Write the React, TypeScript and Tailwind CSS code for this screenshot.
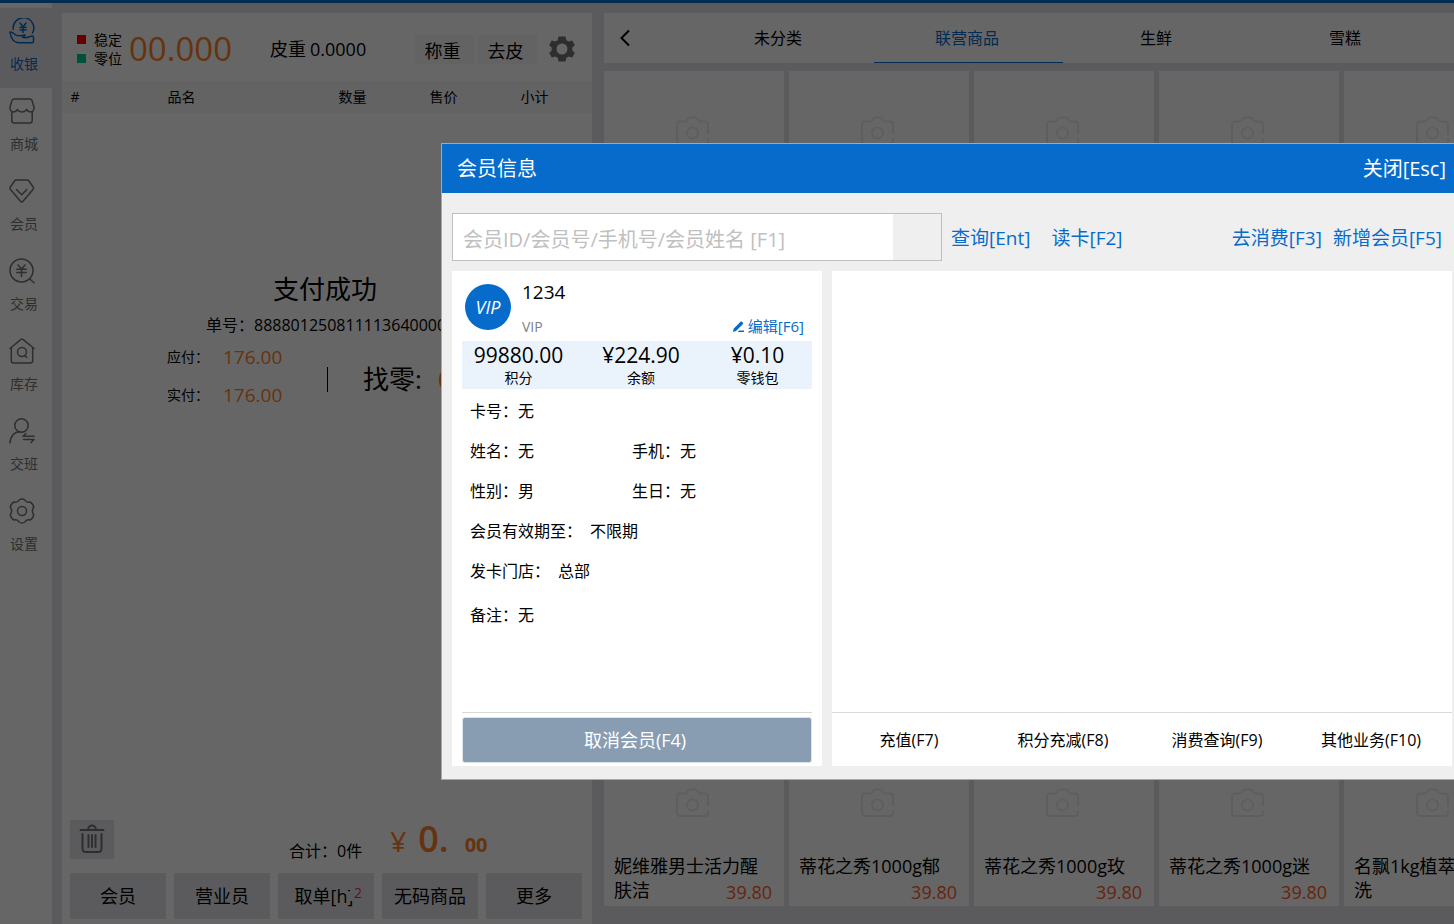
import React from 'react'

const iconProps = {
  width: 26,
  height: 26,
  viewBox: '0 0 26 26',
  fill: 'none',
  stroke: 'currentColor',
  strokeWidth: 1.5,
  strokeLinecap: 'round' as const,
  strokeLinejoin: 'round' as const,
  'aria-hidden': true,
}

const navItems = [
  {
    label: '收银',
    icon: (
      <svg {...iconProps}>
        <path d="M4.3 11.5A10.300 10.300 0 1 1 23.500 15" />
        <path d="M11 5l3 4 3-4M14 9v5.500M11 9.500h6M11 12h6" />
        <path d="M1 14c.8 6.500 4 10.700 9.500 10.700h12.500c1 0 1.500-.5 1.500-1.500v-4c0-.8-.4-1.200-1.300-1.200-2.200.1-3.700 1.700-6.200 1.700l-3.500-.4c2-.5 2.700-1.300 2.500-2.300-3.500.9-6.800 1.300-9.500-.2C4.800 15.600 3 13.300 1 14z" />
      </svg>
    ),
  },
  {
    label: '商城',
    icon: (
      <svg {...iconProps}>
        <path d="M5 1h16c1 0 1.500.4 1.900 1.200L25 9c.3 3-1 5-3.500 5-2.200 0-3.300-1.300-4-2.500-.8 1.500-2.500 2.500-4.500 2.500s-3.700-1-4.500-2.500c-.7 1.200-1.800 2.500-4 2.500C2 14 .7 12 1 9l2.100-6.800C3.500 1.400 4 1 5 1z" />
        <path d="M2.800 14v8.500c0 1.500 1 2.500 2.500 2.500h15.400c1.500 0 2.500-1 2.500-2.500V14" />
      </svg>
    ),
  },
  {
    label: '会员',
    icon: (
      <svg {...iconProps}>
        <path d="M6.800 2h11.400c.7 0 1.200.3 1.600.8l4.500 6.400c.5.700.4 1.300-.1 2L14 23.300c-.8 1-1.700 1-2.500 0L1.300 11.200c-.5-.7-.6-1.300-.1-2l4.500-6.400C6 2.300 6.200 2 6.800 2z" />
        <path d="M7.500 11.500l5.200 5.300 5.200-5.300" />
      </svg>
    ),
  },
  {
    label: '交易',
    icon: (
      <svg {...iconProps}>
        <circle cx="12.500" cy="12.500" r="11.500" />
        <path d="M20.500 20.800l4.500 4M9 7l3.500 4L16 7M12.500 11v7.500M7.800 11.300h9.400M7.800 14.600h9.400" />
      </svg>
    ),
  },
  {
    label: '库存',
    icon: (
      <svg {...iconProps}>
        <path d="M1 10.500L11.700 1.600c.9-.7 1.700-.7 2.600 0L25 10.500M2.300 9.800v13c0 1.300.9 2.200 2.200 2.200h17c1.300 0 2.200-.9 2.200-2.200v-13" />
        <circle cx="13" cy="14" r="4.500" />
        <path d="M15.500 17.200l2.300 2.300" />
      </svg>
    ),
  },
  {
    label: '交班',
    icon: (
      <svg {...iconProps}>
        <circle cx="12.500" cy="7.500" r="6.700" />
        <path d="M1 25c.2-6.500 4-11.200 10.500-11.200M25 18.300H14l3-2.800M14.500 21.500H25l-3 3" />
      </svg>
    ),
  },
  {
    label: '设置',
    icon: (
      <svg {...iconProps}>
        <path d="M10 2Q13 0 16 2C17 4.500 18.500 4.800 21 4Q23.500 5 24.800 9C23 11.500 23 14.500 24.800 17Q23.500 21 21 22C18.500 21.200 17 21.500 16 24Q13 26 10 24C9 21.500 7.500 21.200 5 22Q2.500 21 1.200 17C3 14.500 3 11.500 1.200 9Q2.500 5 5 4C7.500 4.800 9 4.500 10 2z" />
        <circle cx="13" cy="13" r="4.500" />
      </svg>
    ),
  },
]

const categories = ['未分类', '联营商品', '生鲜', '雪糕']

const products = [
  { name: '妮维雅男士活力醒', rest: '肤洁', price: '39.80' },
  { name: '蒂花之秀1000g郁', rest: '', price: '39.80' },
  { name: '蒂花之秀1000g玫', rest: '', price: '39.80' },
  { name: '蒂花之秀1000g迷', rest: '', price: '39.80' },
  { name: '名飘1kg植萃', rest: '洗', price: '' },
]

const memberRows = [
  [{ label: '卡号：', value: '无' }],
  [{ label: '姓名：', value: '无' }, { label: '手机：', value: '无' }],
  [{ label: '性别：', value: '男' }, { label: '生日：', value: '无' }],
  [{ label: '会员有效期至：', value: '不限期', spaced: true }],
  [{ label: '发卡门店：', value: '总部', spaced: true }],
  [{ label: '备注：', value: '无' }],
]

const memberStats = [
  { label: '积分', value: '99880.00' },
  { label: '余额', value: '¥224.90' },
  { label: '零钱包', value: '¥0.10' },
]

const memberActions = ['充值(F7)', '积分充减(F8)', '消费查询(F9)', '其他业务(F10)']

function CameraIcon() {
  return (
    <svg width="34" height="30" viewBox="0 0 34 30" fill="none" stroke="#ebebeb" strokeWidth="2" aria-hidden="true">
      <path d="M32 18V8.500C32 6.500 31 5.500 29 5.500h-4.500c-1.500 0-1.800-.7-2.500-2C21.200 2 20.500 1.500 19 1.500h-4.500c-1.500 0-2.200.5-3 2-.7 1.300-1 2-2.500 2H4c-2 0-3 1-3 3V25c0 2 1 3 3 3h25c2 0 3-1 3-3v-2.500" />
      <circle cx="16.500" cy="17" r="5.500" />
    </svg>
  )
}

function Sidebar() {
  return (
    <nav className="flex w-[52px] shrink-0 flex-col bg-white pt-[5px]">
      {navItems.map((item, i) => (
        <a
          key={item.label}
          href="#"
          className={
            i === 0
              ? 'flex h-20 flex-col items-center gap-3 bg-[#e4e4e9] pt-[10px] pr-2 text-[#066bcb]'
              : 'flex h-20 flex-col items-center gap-3 pt-[10px] pr-2 text-[#737373]'
          }
        >
          {item.icon}
          <span className="pl-1 text-sm leading-4">{item.label}</span>
        </a>
      ))}
    </nav>
  )
}

function ScaleHeader() {
  return (
    <div className="flex h-[68px] items-center pt-1 pr-[17px] pl-[15px]">
      <div className="flex flex-col gap-px text-sm leading-[18px]">
        <div className="flex items-center gap-2">
          <i className="size-[9px] bg-[#ff0000]" />稳定
        </div>
        <div className="flex items-center gap-2">
          <i className="size-[9px] bg-[#00c896]" />零位
        </div>
      </div>
      <div className="ml-[7px] text-[33px] leading-9 text-[#ff7f27]">00.000</div>
      <div className="ml-[38px] flex gap-1 text-lg leading-6">
        <span>皮重</span>
        <span>0.0000</span>
      </div>
      <div className="ml-auto flex items-center gap-1">
        <button className="h-[29px] w-[59px] bg-[#f7f7f7] pt-[3px] pr-1 text-lg leading-6">称重</button>
        <button className="h-[29px] w-[59px] bg-[#f7f7f7] pt-[3px] pr-1 text-lg leading-6">去皮</button>
        <button aria-label="设置" className="ml-2 text-[#737373]">
          <svg width="26" height="26" viewBox="0 0 26 26" fill="currentColor" aria-hidden="true">
            <path
              fillRule="evenodd"
              d="M9.500.5h7l.8 3.700 2.500 1.400 3.500-1.200 2.500 4.800-2.500 2.300v3l2.500 2.300-2.500 4.800-3.500-1.200-2.500 1.400-.8 3.700h-7l-.8-3.700-2.500-1.400-3.500 1.200L.2 16.800l2.500-2.300v-3L.2 9.200l2.500-4.800 3.500 1.200 2.500-1.400zM13 7.500a5.500 5.500 0 1 0 0 11 5.500 5.500 0 0 0 0-11z"
            />
          </svg>
        </button>
      </div>
    </div>
  )
}

function CartPanel() {
  return (
    <section className="flex w-[530px] shrink-0 flex-col bg-white">
      <ScaleHeader />
      <table className="w-full table-fixed bg-[#f7f7f7] text-sm leading-8">
        <thead>
          <tr>
            <th className="w-[26px] font-normal">#</th>
            <th className="pr-8 font-normal">品名</th>
            <th className="w-[91px] font-normal">数量</th>
            <th className="w-[91px] font-normal">售价</th>
            <th className="w-[103px] pr-3 font-normal">小计</th>
          </tr>
        </thead>
      </table>

      <div className="flex grow flex-col pt-[158px]">
        <h2 className="pr-1 text-center text-[26px] leading-9">支付成功</h2>
        <p className="mt-1 pl-36 text-base leading-7 whitespace-nowrap">单号：8888012508111136400000</p>
        <div className="mt-1 flex items-center pl-[105px]">
          <dl className="grid grid-cols-[56px_104px] items-center gap-y-[10px]">
            <dt className="text-sm leading-7">应付：</dt>
            <dd className="text-[19px] leading-7 text-[#ff7f27]">176.00</dd>
            <dt className="text-sm leading-7">实付：</dt>
            <dd className="text-[19px] leading-7 text-[#ff7f27]">176.00</dd>
          </dl>
          <div className="mt-[6px] h-[25px] w-px bg-black" />
          <div className="flex items-center gap-4 pt-[6px] pl-[35px] text-[26px] leading-9">
            <span>找零:</span>
            <span className="text-[#ff7f27]">0.00</span>
          </div>
        </div>
      </div>

      <div className="flex items-end px-2 pb-[14px]">
        <button aria-label="清空" className="flex h-[39px] w-11 items-center justify-center bg-[#e4e4e9] pb-[2px] text-[#737373]">
          <svg width="26" height="30" viewBox="0 0 26 30" fill="none" stroke="currentColor" strokeWidth="2" strokeLinecap="round" aria-hidden="true">
            <path d="M1.500 6h23M9 5.500c.5-2.500 2-4 4-4s3.500 1.500 4 4M3.500 10v14.500c0 2.300 1.200 3.500 3.500 3.500h12c2.300 0 3.500-1.200 3.500-3.500V10M9.500 11v12M13 11v12M16.500 11v12" />
          </svg>
        </button>
        <div className="ml-[175px] text-base leading-4">合计：0件</div>
        <div className="ml-7 flex items-baseline text-[#ff7f27]">
          <span className="text-[28px] leading-7">¥</span>
          <span className="ml-3 text-4xl leading-7 font-semibold">0.</span>
          <span className="ml-4 text-xl leading-7 font-bold">00</span>
        </div>
      </div>
      <div className="grid grid-cols-5 gap-2 pr-[10px] pb-[5px] pl-2 text-lg">
        <button className="h-[46px] bg-[#e4e4e9]">会员</button>
        <button className="h-[46px] bg-[#e4e4e9]">营业员</button>
        <button className="relative h-[46px] bg-[#e4e4e9] pr-1">
          取单[h]
          <span className="absolute top-3 right-3 bg-[#e4e4e9] pl-1 text-sm leading-4 text-[#f03040]">2</span>
        </button>
        <button className="h-[46px] bg-[#e4e4e9]">无码商品</button>
        <button className="h-[46px] bg-[#e4e4e9]">更多</button>
      </div>
    </section>
  )
}

function ProductPanel() {
  return (
    <section className="min-w-0 grow overflow-hidden">
      <div className="flex h-[50px] bg-white">
        <button aria-label="返回" className="w-[81px] shrink-0 pl-[15px]">
          <svg width="12" height="18" viewBox="0 0 12 18" fill="none" stroke="currentColor" strokeWidth="2" aria-hidden="true">
            <path d="M10 1.500L2.500 9l7.500 7.500" />
          </svg>
        </button>
        {categories.map((name, i) => (
          <button
            key={name}
            className={
              i === 1
                ? 'w-[189px] shrink-0 border-b border-[#066bcb] pr-[3px] text-base text-[#066bcb]'
                : 'w-[189px] shrink-0 pr-[3px] text-base'
            }
          >
            {name}
          </button>
        ))}
      </div>
      <div className="mt-2 grid grid-cols-[repeat(5,180px)] gap-[5px]">
        {[0, 1, 2, 3, 4].map((row) =>
          products.map((product) => (
            <article key={row + product.name} className="flex h-[163px] flex-col bg-white pt-[45px] pr-3 pl-[10px] text-lg leading-6">
              <div className="flex justify-center">
                <CameraIcon />
              </div>
              {row === 4 && (
                <>
                  <h3 className="mt-9 whitespace-nowrap">{product.name}</h3>
                  <div className="flex justify-between">
                    <span>{product.rest}</span>
                    <span className="pt-[2px] text-[#ff5a1f]">{product.price}</span>
                  </div>
                </>
              )}
            </article>
          ))
        )}
      </div>
    </section>
  )
}

function MemberCard() {
  return (
    <div className="flex min-h-[495px] w-[370px] shrink-0 flex-col bg-white px-[10px] pb-[3px]">
      <div className="flex h-[70px] pt-[7px] pl-[3px]">
        <div className="mt-[6px] flex size-[46px] items-center justify-center rounded-full bg-[#066bcb] text-lg font-medium text-white italic">
          VIP
        </div>
        <div className="ml-[11px] flex flex-col">
          <span className="text-[19px] leading-7">1234</span>
          <span className="mt-3 text-sm leading-[18px] text-[#808080]">VIP</span>
        </div>
        <button className="mt-[38px] mr-2 ml-auto flex h-5 items-center gap-1 text-[15px] text-[#066bcb]">
          <svg width="11" height="11" viewBox="0 0 11 11" fill="currentColor" aria-hidden="true">
            <path d="M0 11l.6-3.200L7.300.9c.6-.6 1.300-.6 1.900 0l.6.6c.6.600.6 1.200 0 1.800L3 9.900zM6 9.600h5V11H4.600z" />
          </svg>
          编辑[F6]
        </button>
      </div>
      <dl className="grid h-12 grid-cols-[113px_132px_1fr] bg-[#eaf3fb] pr-1 text-center">
        {memberStats.map((stat) => (
          <div key={stat.label} className="flex flex-col-reverse justify-end">
            <dt className="text-sm leading-[18px]">{stat.label}</dt>
            <dd className="text-[21px] leading-7">{stat.value}</dd>
          </div>
        ))}
      </dl>
      <div className="flex grow flex-col gap-4 pt-[10px] pl-2 text-base leading-6">
        {memberRows.map((row) => (
          <div key={row[0].label} className="grid grid-cols-[162px_1fr] last:pt-1">
            {row.map((field) => (
              <div key={field.label} className={'spaced' in field ? 'flex gap-2 whitespace-nowrap' : 'flex'}>
                <span>{field.label}</span>
                <span>{field.value}</span>
              </div>
            ))}
          </div>
        ))}
      </div>
      <div className="border-t border-[#d9d9d9] pt-1">
        <button className="h-[46px] w-full rounded-[3px] border border-[#dbe3ea] bg-[#889db2] pr-1 text-lg text-white">取消会员(F4)</button>
      </div>
    </div>
  )
}

function MemberDialog() {
  return (
    <div
      role="dialog"
      aria-label="会员信息"
      className="absolute top-[143px] right-0 left-[441px] flex flex-col border border-r-0 border-[#a8a8a8] bg-[#efefef]"
    >
      <header className="flex h-[49px] items-center justify-between bg-[#066bcb] pr-2 pl-[15px] text-xl text-white">
        <h1>会员信息</h1>
        <button>关闭[Esc]</button>
      </header>
      <form className="flex items-center pt-5 pr-3 pl-[10px] text-[19px] whitespace-nowrap text-[#066bcb]">
        <div className="flex h-12 w-[490px] shrink-0 border border-[#bfbfbf] pr-12">
          <input
            aria-label="会员ID/会员号/手机号/会员姓名 [F1]"
            placeholder="会员ID/会员号/手机号/会员姓名 [F1]"
            className="min-w-0 grow bg-white px-[10px] pt-[6px] text-xl text-black outline-none placeholder:text-[#c0c0c0]"
          />
        </div>
        <button type="button" className="ml-[9px] pt-[2px]">查询[Ent]</button>
        <button type="button" className="ml-[21px] pt-[2px]">读卡[F2]</button>
        <button type="button" className="ml-auto pt-[2px]">去消费[F3]</button>
        <button type="button" className="ml-[11px] pt-[2px]">新增会员[F5]</button>
      </form>
      <div className="flex gap-[10px] pt-[10px] pr-[2px] pb-[13px] pl-[10px]">
        <MemberCard />
        <div className="flex min-w-0 grow flex-col justify-end bg-white">
          <div className="grid h-[54px] grid-cols-4 border-t border-[#d9d9d9] pr-1 text-base">
            {memberActions.map((action) => (
              <button key={action}>{action}</button>
            ))}
          </div>
        </div>
      </div>
    </div>
  )
}

export default function App() {
  return (
    <div className="relative flex h-screen flex-col overflow-hidden bg-[#e4e4e9] font-['Open_Sans','Noto_Sans_CJK_SC',sans-serif] text-black">
      <div className="h-[3px] shrink-0 bg-[#066bcb]" />
      <div className="flex min-h-0 grow">
        <Sidebar />
        <main className="flex min-w-0 grow gap-3 pt-[10px] pl-[10px]">
          <CartPanel />
          <ProductPanel />
        </main>
      </div>
      <div className="absolute inset-0 bg-black/60" />
      <MemberDialog />
    </div>
  )
}
